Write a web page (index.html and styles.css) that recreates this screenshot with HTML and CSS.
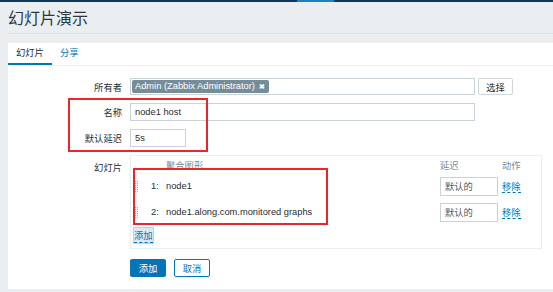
FILE: index.html
```html
<!DOCTYPE html>
<html lang="zh">
<head>
    <meta charset="UTF-8">
    <title>幻灯片演示</title>
    <link rel="stylesheet" href="styles.css">
</head>
<body>
    <div class="topnav"><span class="topnav-active"></span></div>
    <div class="page">
        <h1 class="page-title">幻灯片演示</h1>
        <div class="panel">
            <ul class="tabs">
                <li class="tab active">幻灯片</li>
                <li class="tab">分享</li>
            </ul>
            <form class="form">
                <div class="row row-owner">
                    <label>所有者</label>
                    <div class="field">
                        <div class="multiselect">
                            <span class="tag">Admin (Zabbix Administrator) <b>&#10006;</b></span>
                        </div>
                        <button type="button" class="btn-grey">选择</button>
                    </div>
                </div>
                <div class="row">
                    <label>名称</label>
                    <div class="field"><div class="input wide">node1 host</div></div>
                </div>
                <div class="row">
                    <label>默认延迟</label>
                    <div class="field"><div class="input short">5s</div></div>
                </div>
                <div class="row row-slides">
                    <label>幻灯片</label>
                    <div class="slides">
                        <div class="slides-head">
                            <span></span><span></span>
                            <span>聚合图形</span>
                            <span>延迟</span>
                            <span class="pad">动作</span>
                        </div>
                        <div class="slide">
                            <span class="handle"></span>
                            <span class="num">1:</span>
                            <span>node1</span>
                            <span class="input delay">默认的</span>
                            <span class="pad"><a class="link">移除</a></span>
                        </div>
                        <div class="slide">
                            <span class="handle"></span>
                            <span class="num">2:</span>
                            <span>node1.along.com.monitored graphs</span>
                            <span class="input delay">默认的</span>
                            <span class="pad"><a class="link">移除</a></span>
                        </div>
                        <div class="slides-add"><a class="link focused">添加</a></div>
                    </div>
                </div>
                <div class="buttons">
                    <button type="button" class="btn-main">添加</button>
                    <button type="button" class="btn-alt">取消</button>
                </div>
            </form>
            <div class="mark mark-name"></div>
            <div class="mark mark-slides"></div>
        </div>
    </div>
</body>
</html>
```

FILE: styles.css
```css
*{
    margin: 0;
    padding: 0;
    box-sizing: border-box;
}
body{
    background: #ebeef0;
    font-family: 'Liberation Sans', 'Noto Sans CJK SC', sans-serif;
    font-size: 9.3px;
    color: #1f2c33;
    height: 292px;
    overflow: hidden;
}
.topnav{
    height: 2px;
    background: #0d3a5a;
    display: flex;
}
.topnav-active{
    margin-left: 297px;
    width: 37px;
    background: #1d80c6;
}
.page{
    padding-left: 8px;
}
.page-title{
    font-size: 16px;
    font-weight: normal;
    line-height: 20px;
    padding-top: 7px;
    padding-bottom: 4px;
    border-bottom: 1px solid #dde2e6;
    color: #2b373d;
}
.panel{
    position: relative;
    margin-top: 9px;
    background: #fff;
    height: 246px;
}
.tabs{
    list-style: none;
    display: flex;
    height: 23px;
    border-bottom: 1px solid #eef0f2;
}
.tab{
    padding: 0 8px;
    line-height: 20px;
    color: #0275b8;
}
.tab.active{
    color: #1f2c33;
    border-bottom: 2px solid #0275b8;
}
.form{
    padding-top: 12px;
    display: flex;
    flex-direction: column;
    gap: 8px;
}
.row{
    display: flex;
    align-items: center;
    gap: 8px;
}
.row label{
    width: 114px;
    text-align: right;
}
.row-slides{
    align-items: flex-start;
}
.row-slides label{
    padding-top: 5px;
}
.field{
    display: flex;
    gap: 3px;
}
.multiselect,
.input{
    height: 18px;
    border: 1px solid #c9d2d7;
    background: #fff;
    display: flex;
    align-items: center;
    padding-left: 4px;
}
.multiselect{
    width: 345px;
    height: 17px;
    padding-left: 1px;
}
.tag{
    background: #768d99;
    color: #fff;
    height: 13px;
    line-height: 13px;
    padding: 0 4px 0 3px;
    border-radius: 2px;
}
.tag b{
    font-size: 7px;
    margin-left: 2px;
}
.btn-grey{
    width: 35px;
    height: 17px;
    border: 1px solid #cfd5d9;
    background: #fff;
    border-radius: 2px;
    font: inherit;
    color: #1f2c33;
}
.wide{
    width: 345px;
}
.short{
    width: 56px;
}
.slides{
    width: 412px;
    height: 94px;
    border: 1px solid #eceff1;
    padding: 1px 0 0 3px;
}
.slides-head,
.slide{
    display: grid;
    grid-template-columns: 16px 16px 1fr 58px 43px;
    align-items: center;
}
.slides-head{
    height: 16px;
    color: #768d99;
}
.slide{
    height: 26px;
}
.num{
    padding-left: 1px;
}
.handle{
    width: 4px;
    height: 12px;
    margin-left: 1px;
    background-image:
        linear-gradient(#fff 50%, transparent 50%),
        linear-gradient(90deg, #9aa7ae 50%, transparent 50%);
    background-size: 2px 2px;
}
.delay{
    height: 19px;
    color: #555;
}
.pad{
    padding-left: 4px;
}
.link{
    color: #0275b8;
    border-bottom: 1px dashed #0275b8;
}
.slides-add{
    height: 20px;
    display: flex;
    align-items: center;
}
.focused{
    background: #dbe9f5;
    outline: 1px solid #b9d4ea;
}
.buttons{
    padding-left: 122px;
    margin-top: 2px;
    display: flex;
    gap: 8px;
}
.buttons button{
    width: 36px;
    height: 18px;
    border-radius: 2px;
    font: inherit;
}
.btn-main{
    background: #0275b8;
    border: 1px solid #0275b8;
    color: #fff;
}
.btn-alt{
    background: #fff;
    border: 1px solid #0275b8;
    color: #0275b8;
}
.mark{
    position: absolute;
    border: 2px solid #e8262b;
}
.mark-name{
    left: 60px;
    top: 55px;
    width: 140px;
    height: 54px;
}
.mark-slides{
    left: 125px;
    top: 125px;
    width: 195px;
    height: 57px;
}
```
